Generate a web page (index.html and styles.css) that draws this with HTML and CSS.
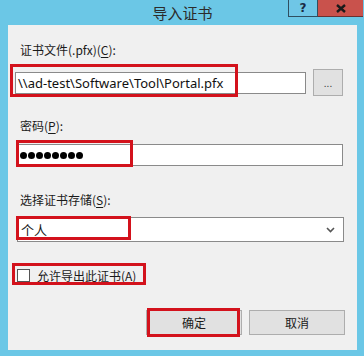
FILE: index.html
```html
<!DOCTYPE html>
<html lang="zh-CN">
<head>
    <meta charset="UTF-8">
    <title>导入证书</title>
    <link rel="stylesheet" href="styles.css">
</head>
<body>
    <div class="window">
        <div class="titlebar">
            <span class="title">导入证书</span>
            <div class="controls">
                <span class="btn-help">?</span>
                <span class="btn-close">
                    <svg width="10" height="9" viewBox="0 0 10 9"><path d="M1 1 L9 8 M9 1 L1 8" stroke="#1a1a1a" stroke-width="2.4"/></svg>
                </span>
            </div>
        </div>
        <div class="content">
            <div class="label">证书文件(.pfx)(<u>C</u>):</div>
            <div class="file-row">
                <div class="input file-input">\\ad-test\Software\Tool\Portal.pfx</div>
                <button class="btn browse">...</button>
                <span class="mark mark-file"></span>
            </div>

            <div class="label label-pw">密码(<u>P</u>):</div>
            <div class="pw-row">
                <div class="input pw-input">
                    <span class="dots"><i></i><i></i><i></i><i></i><i></i><i></i><i></i><i></i></span>
                </div>
                <span class="mark mark-pw"></span>
            </div>

            <div class="label label-store">选择证书存储(<u>S</u>):</div>
            <div class="select-row">
                <div class="input select">
                    <span>个人</span>
                    <svg width="9" height="6" viewBox="0 0 9 6"><path d="M1 1 L4.5 4.5 L8 1" fill="none" stroke="#555" stroke-width="1.6"/></svg>
                </div>
                <span class="mark mark-select"></span>
            </div>

            <div class="check-row">
                <span class="checkbox"></span>
                <span>允许导出此证书(<u>A</u>)</span>
                <span class="mark mark-check"></span>
            </div>

            <div class="actions">
                <div class="ok-wrap">
                    <button class="btn action">确定</button>
                    <span class="mark mark-ok"></span>
                </div>
                <button class="btn action">取消</button>
            </div>
        </div>
    </div>
</body>
</html>
```

FILE: styles.css
```css
body {
    margin: 0;
    padding: 0;
    background-color: #ffffff;
    font-family: "Noto Sans CJK SC", sans-serif;
    font-size: 12px;
    color: #1a1a1a;
}
.window {
    width: 364px;
    height: 356px;
    box-sizing: border-box;
    background-color: #6bc7e6;
    padding: 0 7px 6px 8px;
    display: flex;
    flex-direction: column;
}
.titlebar {
    height: 25px;
    position: relative;
    display: flex;
    justify-content: center;
    align-items: center;
}
.title {
    font-size: 15px;
    color: #2b2b2b;
    margin-top: -1px;
}
.controls {
    position: absolute;
    top: 0;
    right: -6px;
    display: flex;
}
.btn-help {
    width: 28px;
    height: 16px;
    border: 1px solid #2f4f60;
    border-top: none;
    background-color: #6fc6e6;
    font-family: "DejaVu Sans", sans-serif;
    font-weight: bold;
    font-size: 12px;
    color: #1a2a44;
    display: flex;
    justify-content: center;
    align-items: center;
}
.btn-close {
    width: 45px;
    height: 16px;
    border-bottom: 1px solid #6a3030;
    background-color: #c9524c;
    display: flex;
    justify-content: center;
    align-items: center;
}
.content {
    flex: 1;
    background-color: #f0f0f0;
    padding: 17px 12px 0 9px;
}
.label {
    height: 16px;
    line-height: 16px;
    padding-left: 3px;
}
.label u, .check-row u {
    text-underline-offset: 2px;
}
.input {
    box-sizing: border-box;
    background-color: #ffffff;
    border: 1px solid #8a8a8a;
    display: flex;
    align-items: center;
}
.file-row, .pw-row, .select-row, .check-row, .ok-wrap {
    position: relative;
}
.file-row {
    margin-top: 11px;
    display: flex;
    align-items: center;
}
.file-input {
    width: 291px;
    height: 22px;
    margin-left: -2px;
    padding-left: 2px;
    font-family: "Noto Sans", sans-serif;
    font-size: 13px;
    color: #111;
}
.btn {
    font-family: "Noto Sans CJK SC", sans-serif;
    font-size: 12px;
    color: #1a1a1a;
    background-color: #e1e1e1;
    border: 1px solid #adadad;
    padding: 0;
}
.browse {
    width: 30px;
    height: 27px;
    margin-left: 7px;
    font-size: 10px;
    color: #444;
}
.label-pw {
    margin-top: 22px;
}
.pw-row {
    margin-top: 10px;
}
.pw-input {
    width: 326px;
    height: 22px;
    padding: 1px 0 0 2px;
}
.dots {
    display: flex;
    gap: 1px;
}
.dots i {
    width: 7px;
    height: 7px;
    border-radius: 50%;
    background-color: #000;
}
.label-store {
    margin-top: 26px;
}
.select-row {
    margin-top: 9px;
}
.select {
    width: 327px;
    height: 25px;
    padding: 0 8px 0 3px;
    justify-content: space-between;
    font-size: 13px;
}
.check-row {
    margin-top: 25px;
    height: 16px;
    display: flex;
    align-items: center;
    gap: 7px;
}
.checkbox {
    width: 13px;
    height: 13px;
    box-sizing: border-box;
    border: 1px solid #555;
    background-color: #fff;
}
.actions {
    margin-top: 27px;
    display: flex;
    justify-content: flex-end;
    gap: 7px;
}
.action {
    width: 96px;
    height: 25px;
    display: block;
}
.mark {
    position: absolute;
    border: 3px solid #d3121c;
    box-sizing: border-box;
}
.mark-file {
    left: -7px;
    top: -5px;
    width: 228px;
    height: 33px;
}
.mark-pw {
    left: -1px;
    top: -4px;
    width: 117px;
    height: 27px;
}
.mark-select {
    left: -1px;
    top: -1px;
    width: 115px;
    height: 24px;
}
.mark-check {
    left: -5px;
    top: -4px;
    width: 134px;
    height: 22px;
}
.mark-ok {
    left: 1px;
    top: -2px;
    width: 93px;
    height: 29px;
}
```
